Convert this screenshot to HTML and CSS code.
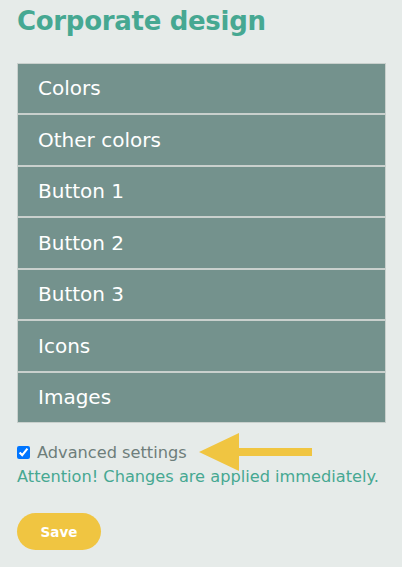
FILE: index.html
```html
<!DOCTYPE html>
<html lang="en">
<head>
    <meta charset="UTF-8">
    <meta name="viewport" content="width=device-width, initial-scale=1.0">
    <title>Corporate design</title>
    <link rel="stylesheet" href="styles.css">
</head>
<body>
    <div class="page">
        <h1 class="page-title">Corporate design</h1>

        <!-- Settings sections -->
        <div class="section-list">
            <div class="section-row">Colors</div>
            <div class="section-row">Other colors</div>
            <div class="section-row">Button 1</div>
            <div class="section-row">Button 2</div>
            <div class="section-row">Button 3</div>
            <div class="section-row">Icons</div>
            <div class="section-row">Images</div>
        </div>

        <div class="advanced">
            <label class="advanced-label">
                <input type="checkbox" checked>
                <span>Advanced settings</span>
            </label>
            <svg class="hint-arrow" viewBox="0 0 114 40" aria-hidden="true">
                <polygon points="0,20 40,1 40,16 113,16 113,24 40,24 40,39" fill="#f0c541"></polygon>
            </svg>
        </div>
        <p class="attention">Attention! Changes are applied immediately.</p>

        <button type="button" class="save">Save</button>
    </div>
</body>
</html>
```

FILE: styles.css
```css
:root {
    --bg-color: #e6ebe9;
    --teal: #46a892;
    --row-color: #74928d;
    --row-border: #c9d0cd;
    --label-gray: #6e7e7b;
    --yellow: #f0c541;
}

* {
    margin: 0;
    padding: 0;
    box-sizing: border-box;
}

body {
    font-family: 'DejaVu Sans', sans-serif;
    background-color: var(--bg-color);
    min-height: 100vh;
}

.page {
    padding: 0 16px 0 17px;
}

.page-title {
    font-size: 26px;
    font-weight: 700;
    color: var(--teal);
    line-height: 40px;
    padding-top: 1px;
    margin-bottom: 21.5px;
    letter-spacing: -0.3px;
}

.section-list {
    display: flex;
    flex-direction: column;
}

.section-row {
    height: 51.5px;
    border: 1px solid var(--row-border);
    background-color: var(--row-color);
    color: #ffffff;
    font-size: 20px;
    display: flex;
    align-items: center;
    padding-left: 20px;
}

.advanced {
    display: flex;
    align-items: center;
    margin-top: 14px;
    height: 30px;
}

.advanced-label {
    display: flex;
    align-items: center;
    gap: 7px;
    color: var(--label-gray);
    font-size: 16.2px;
}

.advanced-label input {
    width: 13px;
    height: 13px;
    margin: 0;
}

.hint-arrow {
    width: 114px;
    height: 40px;
    margin-left: 12px;
    flex-shrink: 0;
}

.attention {
    color: var(--teal);
    font-size: 16.2px;
    line-height: 20px;
    white-space: nowrap;
}

.save {
    margin-top: 26px;
    width: 84px;
    height: 37px;
    border: none;
    border-radius: 19px;
    background-color: var(--yellow);
    color: #ffffff;
    font-family: 'DejaVu Sans', sans-serif;
    font-weight: 700;
    font-size: 13.5px;
    cursor: pointer;
}
```
